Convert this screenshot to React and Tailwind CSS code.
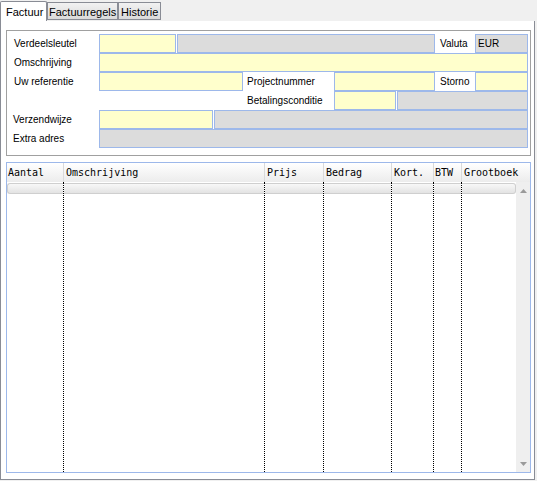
import React from "react";

const Yellow = ({ w, children }) => (
  <div className={`h-[19px] border border-[#9db8ea] bg-[#ffffcc] shrink-0 ${w}`}>{children}</div>
);
const Gray = ({ w, children, className = "" }) => (
  <div className={`h-[19px] border border-[#9db8ea] bg-[#dcdcdc] shrink-0 flex items-center ${w} ${className}`}>{children}</div>
);
const Label = ({ w, children, pl = "pl-[7px]" }) => (
  <div className={`h-[19px] shrink-0 flex items-center ${pl} ${w}`}>{children}</div>
);

const cols = [
  { w: "w-[57px]", h: "Aantal", pl: "pl-[1px]" },
  { w: "w-[201px]", h: "Omschrijving", pl: "pl-[2px]" },
  { w: "w-[59px]", h: "Prijs", pl: "pl-[2px]" },
  { w: "w-[68px]", h: "Bedrag", pl: "pl-[2px]" },
  { w: "w-[42px]", h: "Kort.", pl: "pl-[2px]" },
  { w: "w-[28px]", h: "BTW", pl: "pl-[1px]" },
];

export default function App() {
  return (
    <div className="w-[537px] h-[481px] bg-[#f0f0f0] overflow-hidden font-['Liberation_Sans',Arial,sans-serif] text-black">
      {/* tabs */}
      <div className="flex items-end h-[21px] text-[11px] leading-[11px]">
        <div className="w-[47px] h-[20px] bg-white border-l border-t border-r border-[#898c95] rounded-t-[2px] pl-[5px] pt-[5px]">
          Factuur
        </div>
        <div className="w-[71px] h-[18px] mb-[1px] border border-[#898c95] bg-gradient-to-b from-[#f2f2f2] to-[#dadada] pl-[1px] pt-[4px]">
          Factuurregels
        </div>
        <div className="w-[43px] h-[18px] mb-[1px] border border-[#898c95] bg-gradient-to-b from-[#f2f2f2] to-[#dadada] pl-[2px] pt-[4px]">
          Historie
        </div>
      </div>

      {/* panel */}
      <div className="w-[535px] h-[459px] bg-white border-l border-r border-b border-[#898c95] pl-[5px] pt-[9px] flex flex-col gap-[6px]">
        {/* group box */}
        <div className="w-[525px] h-[126px] shrink-0 border border-[#a0a0a0] pt-[3px] text-[10px] leading-[12px] flex flex-col">
          <div className="flex">
            <Label w="w-[92px]">Verdeelsleutel</Label>
            <Yellow w="w-[77px]" />
            <div className="w-[1px]" />
            <Gray w="w-[258px]" />
            <Label w="w-[40px]" pl="pl-[5px]">Valuta</Label>
            <Gray w="w-[53px]" className="pl-[2px]">EUR</Gray>
          </div>
          <div className="flex">
            <Label w="w-[92px]">Omschrijving</Label>
            <Yellow w="w-[429px]" />
          </div>
          <div className="flex">
            <Label w="w-[92px]">Uw referentie</Label>
            <Yellow w="w-[144px]" />
            <Label w="w-[91px]" pl="pl-[4px]">Projectnummer</Label>
            <Yellow w="w-[101px]" />
            <Label w="w-[40px]" pl="pl-[5px]">Storno</Label>
            <Yellow w="w-[53px]" />
          </div>
          <div className="flex">
            <div className="w-[236px] shrink-0" />
            <Label w="w-[91px]" pl="pl-[4px]">Betalingsconditie</Label>
            <Yellow w="w-[62px]" />
            <div className="w-[1px]" />
            <Gray w="w-[131px]" />
          </div>
          <div className="flex">
            <Label w="w-[92px]" pl="pl-[6px]">Verzendwijze</Label>
            <Yellow w="w-[114px]" />
            <div className="w-[1px]" />
            <Gray w="w-[314px]" />
          </div>
          <div className="flex">
            <Label w="w-[92px]" pl="pl-[6px]">Extra adres</Label>
            <Gray w="w-[429px]" />
          </div>
        </div>

        {/* grid */}
        <div className="w-[525px] h-[311px] shrink-0 border border-[#9db8ea] flex flex-col font-['DejaVu_Sans_Mono',monospace] text-[10px] leading-[12px]">
          <div className="h-[19px] flex bg-gradient-to-b from-white to-[#ececec] shrink-0">
            {cols.map((c) => (
              <div key={c.h} className={`${c.w} h-full shrink-0 border-r border-[#dadada] flex items-center ${c.pl}`}>
                {c.h}
              </div>
            ))}
            <div className="flex-1 h-full flex items-center pl-[2px]">Grootboek</div>
          </div>
          <div className="flex-1 flex">
            {cols.map((c, i) => (
              <div key={c.h} className={`${c.w} h-full shrink-0 border-r border-dotted border-black pt-[1px]`}>
                <div
                  className={`h-[11px] border-y border-[#cfcfcf] bg-gradient-to-b from-[#f8f8f8] to-[#e3e3e3] ${
                    i === 0 ? "border-l rounded-l-[3px]" : ""
                  }`}
                />
              </div>
            ))}
            <div className="w-[54px] h-full shrink-0 pt-[1px]">
              <div className="h-[11px] border-y border-r border-[#cfcfcf] rounded-r-[3px] bg-gradient-to-b from-[#f8f8f8] to-[#e3e3e3]" />
            </div>
            <div className="flex-1 h-full bg-[#efefef] flex flex-col items-center justify-between pt-[7px] pb-[6px]">
              <svg width="7" height="4" viewBox="0 0 7 4">
                <path d="M3.5 0 L7 4 L0 4 Z" fill="#9a9a9a" />
              </svg>
              <svg width="7" height="4" viewBox="0 0 7 4">
                <path d="M0 0 L7 0 L3.5 4 Z" fill="#9a9a9a" />
              </svg>
            </div>
          </div>
        </div>
      </div>
    </div>
  );
}
